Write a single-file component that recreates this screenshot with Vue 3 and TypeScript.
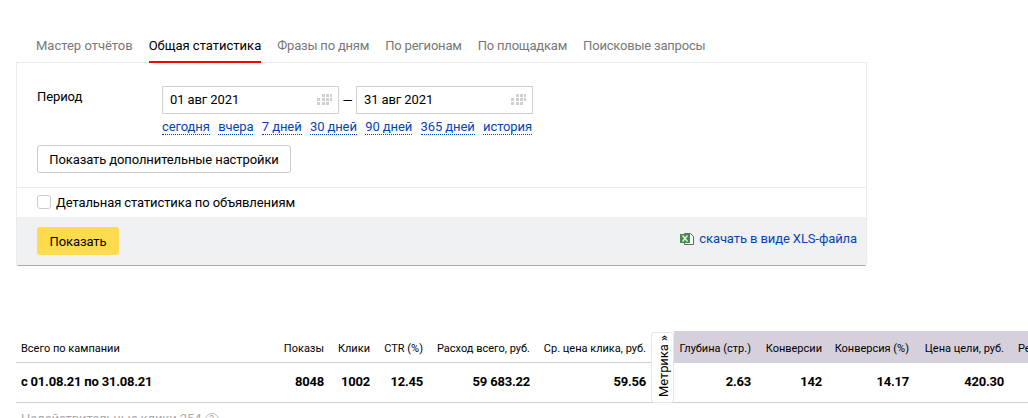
<template>
  <div class="page">
    <!-- ТАБЫ -->
    <ul class="tabs">
      <li v-for="tab in tabs" :key="tab" class="tabs__item" :class="{ 'tabs__item--active': tab === activeTab }">{{ tab }}</li>
    </ul>

    <!-- ФОРМА -->
    <section class="panel">
      <div class="period">
        <span class="period__label">Период</span>
        <div class="period__body">
          <div class="period__dates">
            <div class="date">
              <span>01 авг 2021</span>
              <svg class="date__icon" width="15" height="11" viewBox="0 0 15 11"><path d="M5 0h3v3H5zM9 0h3v3H9zM13 0h2v3h-2zM0 4h3v3H0zM5 4h3v3H5zM9 4h3v3H9zM13 4h2v3h-2zM0 8h3v3H0zM5 8h3v3H5zM9 8h3v3H9z" fill="#d0d0d0"/></svg>
            </div>
            <span class="period__dash">—</span>
            <div class="date">
              <span>31 авг 2021</span>
              <svg class="date__icon" width="15" height="11" viewBox="0 0 15 11"><path d="M5 0h3v3H5zM9 0h3v3H9zM13 0h2v3h-2zM0 4h3v3H0zM5 4h3v3H5zM9 4h3v3H9zM13 4h2v3h-2zM0 8h3v3H0zM5 8h3v3H5zM9 8h3v3H9z" fill="#d0d0d0"/></svg>
            </div>
          </div>
          <div class="period__links">
            <a v-for="l in quickLinks" :key="l" class="dotted">{{ l }}</a>
          </div>
        </div>
      </div>
      <button class="btn-more">Показать дополнительные настройки</button>
      <label class="detail">
        <span class="detail__box"></span>
        Детальная статистика по объявлениям
      </label>
      <div class="panel__footer">
        <button class="btn-show">Показать</button>
        <a class="xls">
          <svg width="15" height="14" viewBox="0 0 15 14">
            <path d="M4.500 1.500h6l3 3v8h-9z" fill="#fff" stroke="#666" stroke-width="1"/>
            <path d="M0 2h10v9H0z" fill="#3f8f4f"/>
            <path d="M2.500 3.500l5 6M7.500 3.500l-5 6" stroke="#dff0e0" stroke-width="1.500"/>
          </svg>
          скачать в виде XLS-файла
        </a>
      </div>
    </section>

    <!-- ТАБЛИЦА -->
    <div class="stats">
      <div class="stats__row stats__row--head">
        <span v-for="c in mainColumns" :key="c.title" class="cell" :style="{ width: c.width + 'px' }">{{ c.title }}</span>
        <span class="stats__gap"></span>
        <div class="stats__metrika-head">
          <span v-for="c in goalColumns" :key="c.title" class="cell" :style="{ width: c.width + 'px' }">{{ c.title }}</span>
          <span class="cell cell--cut">Рентабельность</span>
        </div>
      </div>
      <div class="stats__row stats__row--body">
        <span v-for="c in mainColumns" :key="c.title" class="cell" :style="{ width: c.width + 'px' }">{{ c.value }}</span>
        <span class="stats__gap"></span>
        <span v-for="c in goalColumns" :key="c.title" class="cell" :style="{ width: c.width + 'px' }">{{ c.value }}</span>
      </div>
      <div class="metrika">Метрика »</div>
    </div>
    <div class="invalid">
      Недействительные клики 254
      <span class="invalid__help">?</span>
    </div>
  </div>
</template>

<script setup lang="ts">
interface Column {
  title: string
  value: string
  width: number
}

const tabs = ['Мастер отчётов', 'Общая статистика', 'Фразы по дням', 'По регионам', 'По площадкам', 'Поисковые запросы']
const activeTab = 'Общая статистика'
const quickLinks = ['сегодня', 'вчера', '7 дней', '30 дней', '90 дней', '365 дней', 'история']

const mainColumns: Column[] = [
  { title: 'Всего по кампании', value: 'с 01.08.21 по 31.08.21', width: 260 },
  { title: 'Показы', value: '8048', width: 48 },
  { title: 'Клики', value: '1002', width: 46 },
  { title: 'CTR (%)', value: '12.45', width: 53 },
  { title: 'Расход всего, руб.', value: '59 683.22', width: 107 },
  { title: 'Ср. цена клика, руб.', value: '59.56', width: 116 },
]

const goalColumns: Column[] = [
  { title: 'Глубина (стр.)', value: '2.63', width: 77 },
  { title: 'Конверсии', value: '142', width: 71 },
  { title: 'Конверсия (%)', value: '14.17', width: 87 },
  { title: 'Цена цели, руб.', value: '420.30', width: 95 },
]
</script>

<style scoped>
.page {
  width: 1028px;
  height: 418px;
  overflow: hidden;
  font-family: Roboto, 'Liberation Sans', sans-serif;
  font-size: 13px;
  letter-spacing: -0.1px;
  color: #000;
  background: #fff;
}

/* ТАБЫ */
.tabs {
  display: flex;
  gap: 16px;
  list-style: none;
  margin: 0;
  padding: 37px 0 0 36px;
  height: 25px;
}
.tabs__item { color: #777; height: 26px; line-height: 18px; letter-spacing: -0.2px; }
.tabs__item:first-child { letter-spacing: 0; }
.tabs__item--active { color: #000; border-bottom: 2px solid #f00; height: 24px; letter-spacing: 0; }

/* ФОРМА */
.panel {
  width: 851px;
  height: 204px;
  box-sizing: border-box;
  margin-left: 16px;
  border: 1px solid #ebebeb;
  border-bottom: 1px solid #aaa;
  border-radius: 0 0 3px 3px;
  display: flex;
  flex-direction: column;
}
.period {
  display: flex;
  padding: 23px 0 0 20px;
}
.period__label { width: 125px; line-height: 22px; }
.period__dates { display: flex; align-items: center; }
.period__dash { width: 17px; text-align: center; }
.date {
  width: 177px;
  height: 28px;
  box-sizing: border-box;
  border: 1px solid #d0d0d0;
  padding: 0 6px 1px 7px;
  display: flex;
  align-items: center;
  justify-content: space-between;
}
.period__links {
  display: flex;
  justify-content: space-between;
  margin: 6px 1px 0 0;
}
.dotted {
  color: #04b;
  border-bottom: 1px dotted #04b;
  line-height: 14px;
}
.btn-more {
  align-self: flex-start;
  margin: 10px 0 0 20px;
  width: 254px;
  height: 28px;
  background: #fff;
  border: 1px solid #ccc;
  border-radius: 3px;
  font: inherit;
  letter-spacing: inherit;
  color: #000;
}
.detail {
  margin-top: 14px;
  border-top: 1px solid #ebebeb;
  height: 29px;
  padding-left: 20px;
  display: flex;
  align-items: center;
  gap: 5px;
  line-height: 25px;
}
.detail__box {
  width: 12px;
  height: 12px;
  border: 1px solid #ccc;
  border-radius: 3px;
  margin-bottom: 2px;
}
.panel__footer {
  flex: 1;
  background: #f0f1f3;
  padding: 0 9px 0 20px;
  display: flex;
  align-items: center;
  justify-content: space-between;
}
.btn-show {
  width: 82px;
  height: 28px;
  background: #ffdb4d;
  border: none;
  border-radius: 3px;
  font: inherit;
  letter-spacing: inherit;
  color: #000;
}
.xls { color: #04b; display: flex; align-items: center; gap: 4px; padding-bottom: 5px; }

/* ТАБЛИЦА */
.stats {
  position: relative;
  margin-top: 65px;
  margin-left: 16px;
  width: 1012px;
}
.stats__row { display: flex; white-space: nowrap; }
.stats__row--head {
  height: 32px;
  box-sizing: border-box;
  align-items: center;
  font-size: 11px;
  letter-spacing: 0;
  border-bottom: 1px solid #d0d0d0;
}
.stats__row--head .cell { padding-top: 3px; }
.stats__row--body {
  height: 40px;
  box-sizing: border-box;
  padding-bottom: 3px;
  align-items: center;
  font-weight: 700;
  letter-spacing: -0.2px;
  border-bottom: 1px solid #d0d0d0;
}
.cell { display: block; text-align: right; flex-shrink: 0; }
.stats__row > .cell:first-child { text-align: left; padding-left: 5px; box-sizing: border-box; }
.cell--cut { margin-left: 14px; }
.stats__gap { width: 28px; flex-shrink: 0; }
.stats__metrika-head {
  display: flex;
  align-items: center;
  height: 100%;
  background: #d5d0dc;
  flex: 1;
  overflow: hidden;
}
.metrika {
  position: absolute;
  left: 635px;
  top: 1px;
  width: 23px;
  height: 71px;
  box-sizing: border-box;
  background: #fff;
  border: 1px solid #e6e6e6;
  border-radius: 3px;
  writing-mode: vertical-rl;
  transform: rotate(180deg);
  text-align: left;
  line-height: 23px;
  padding-top: 5px;
}

.invalid {
  margin: 8px 0 0 21px;
  color: #aaa;
}
.invalid__help {
  display: inline-block;
  width: 12px;
  height: 12px;
  line-height: 12px;
  border: 1px solid #bbb;
  border-radius: 50%;
  text-align: center;
  font-size: 10px;
}
</style>
